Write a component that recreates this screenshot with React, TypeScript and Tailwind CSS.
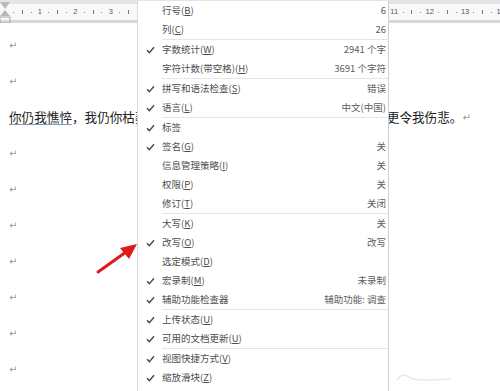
import React from "react";

type Row =
	| { sep: true }
	| { sep?: false; check?: boolean; label: string; key?: string; value?: string };

const ROWS: Row[] = [
	{ label: "行号", key: "B", value: "6" },
	{ label: "列", key: "C", value: "26" },
	{ sep: true },
	{ check: true, label: "字数统计", key: "W", value: "2941 个字" },
	{ label: "字符计数(带空格)", key: "H", value: "3691 个字符" },
	{ sep: true },
	{ check: true, label: "拼写和语法检查", key: "S", value: "错误" },
	{ check: true, label: "语言", key: "L", value: "中文(中国)" },
	{ sep: true },
	{ check: true, label: "标签" },
	{ check: true, label: "签名", key: "G", value: "关" },
	{ label: "信息管理策略", key: "I", value: "关" },
	{ label: "权限", key: "P", value: "关" },
	{ label: "修订", key: "T", value: "关闭" },
	{ sep: true },
	{ label: "大写", key: "K", value: "关" },
	{ check: true, label: "改写", key: "O", value: "改写" },
	{ label: "选定模式", key: "D" },
	{ check: true, label: "宏录制", key: "M", value: "未录制" },
	{ check: true, label: "辅助功能检查器", value: "辅助功能: 调查" },
	{ sep: true },
	{ check: true, label: "上传状态", key: "U" },
	{ check: true, label: "可用的文档更新", key: "U" },
	{ sep: true },
	{ check: true, label: "视图快捷方式", key: "V" },
	{ check: true, label: "缩放滑块", key: "Z" },
	{ check: true, label: "缩放", value: "100%" },
];

const FONT = { fontFamily: '"Noto Sans CJK SC", "Noto Sans", sans-serif' };

function Check() {
	return (
		<svg width="9" height="8" viewBox="0 0 9 8" className="block">
			<path d="M1 4.2 L3.4 6.6 L8 1.2" fill="none" stroke="#4a4a4a" strokeWidth="1.4" />
		</svg>
	);
}

function Ruler() {
	const cells = Array.from({ length: 57 }, (_, i) => i);
	return (
		<div className="relative">
			<div className="h-[4px] bg-[#e4e4e4]" />
			<div className="h-[16px] bg-[#f8f8f8] flex">
				{cells.map((i) => (
					<div key={i} className="w-[8.86px] shrink-0 flex items-center justify-center">
						{i % 4 === 0 && i > 0 ? (
							<span className="text-[7.5px] leading-none text-[#555] font-['Liberation_Sans']">{i / 4}</span>
						) : i % 4 === 2 ? (
							<span className="w-px h-[4px] bg-[#777]" />
						) : (
							<span className="w-px h-px bg-[#888]" />
						)}
					</div>
				))}
			</div>
			<div className="h-[3px] bg-[#d8d8d8]" />
			<svg width="11" height="21" viewBox="0 0 11 21" className="absolute left-0 top-[2px]">
				<path d="M0 0 H10 L5 7 Z" fill="#b9b9b9" />
				<path d="M5 8 L10 14 H0 Z" fill="#b9b9b9" />
				<rect x="0" y="15" width="10" height="6" fill="none" stroke="#a9a9a9" />
			</svg>
		</div>
	);
}

function Mark() {
	return <span className="text-[10px] text-[#9a9a9a] font-['DejaVu_Sans']">↵</span>;
}

export default function App() {
	const lines = Array.from({ length: 10 }, (_, i) => i);
	return (
		<div className="relative w-[500px] h-[391px] overflow-hidden bg-white" style={FONT}>
			<Ruler />
			<div className="pt-[4px] pl-[9px]">
				{lines.map((i) =>
					i === 2 ? (
						<div key={i} className="h-[36px] flex items-center text-[12.6px] text-[#222] whitespace-nowrap">
							<span className="underline decoration-[#7f9cc4] underline-offset-2">你仍我憔悴</span>
							<span>，我仍你枯萎，我们曾经的誓言如今已成空，这一切都让更令我伤悲。</span>
							<Mark />
						</div>
					) : (
						<div key={i} className="h-[36px] flex items-center">
							<Mark />
						</div>
					)
				)}
			</div>

			<svg width="60" height="30" viewBox="0 0 60 30" className="absolute left-[395px] top-[362px]">
				<path d="M2 18 C8 10 12 14 18 17 C28 19 40 18 56 17" fill="none" stroke="#e9e9e9" strokeWidth="1.5" />
			</svg>

			<div className="absolute left-[137px] top-[1px] w-[252px] bg-white border-l border-[#d9d9d9] border-r border-r-[#cfcfcf] pb-6">
				{ROWS.map((r, idx) =>
					r.sep ? (
						<div key={idx} className="h-px ml-[24px] bg-[#e6e6e6]" />
					) : (
						<div key={idx} className="h-[19px] flex items-center text-[9.5px] text-[#4d4d4d] whitespace-nowrap">
							<div className="w-[24px] shrink-0 flex justify-center pl-[1px]">{r.check && <Check />}</div>
							<div className="flex-1">
								{r.label}
								{r.key && (
									<>
										(<span className="underline underline-offset-1">{r.key}</span>)
									</>
								)}
							</div>
							<div className="pr-[2px] text-[#5c5c5c]">{r.value}</div>
						</div>
					)
				)}
			</div>

			<svg width="50" height="40" viewBox="0 0 50 40" className="absolute left-[94px] top-[238px]">
				<path d="M4 34 L32 14" stroke="#e01a1a" strokeWidth="3" strokeLinecap="round" />
				<path d="M43 6 L26 10 L35 21 Z" fill="#e01a1a" />
			</svg>
		</div>
	);
}
